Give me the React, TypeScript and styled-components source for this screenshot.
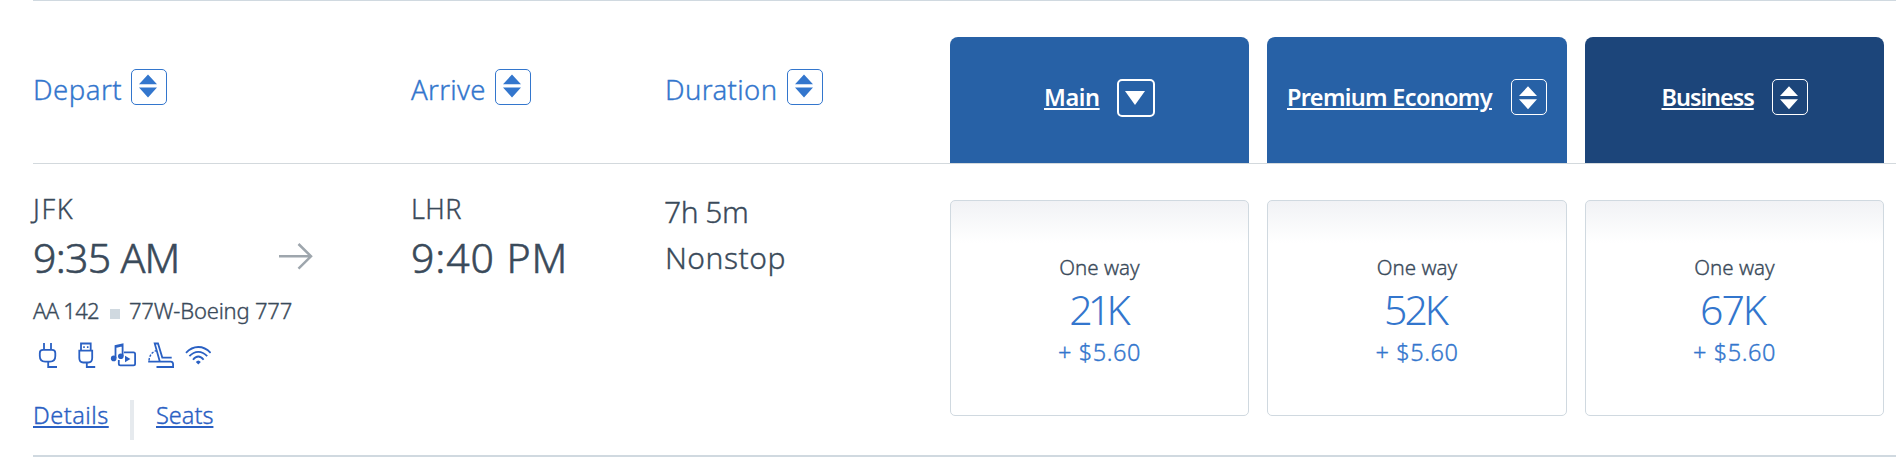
import React from 'react';
import styled, { createGlobalStyle } from 'styled-components';

const GlobalStyle = createGlobalStyle`
  * {
    box-sizing: border-box;
  }

  body {
    margin: 0;
    background: #fff;
    font-family: 'Noto Sans', 'Open Sans', sans-serif;
    color: #3a4a5a;
    overflow: hidden;
  }
`;

const Results = styled.main`
  width: 1896px;
  height: 470px;
  overflow: hidden;
  -webkit-text-stroke: 0.35px currentColor; /* a little more body than the light weight */
`;

// Shared column template so the header lines up with the flight row
const Columns = styled.div`
  display: grid;
  grid-template-columns: 378px 253px 286px 935px;
`;

const Header = styled.header`
  height: 164px;
  margin-left: 33px;
  border-top: 1px solid #d0d9e0;
  border-bottom: 1px solid #d3d9dd;
`;

const FlightRow = styled.section`
  height: 293px;
  margin-left: 33px;
  border-bottom: 2px solid #d0d9e0;
`;

const SortHeading = styled.div`
  display: flex;
  align-items: flex-start;
  padding-top: 68px;
  color: #3376cd;
`;

const SortLabel = styled.span<{ $width: number; $spacing: number; $indent?: number }>`
  width: ${({ $width }) => $width}px;
  padding-left: ${({ $indent = 0 }) => $indent}px;
  font-size: 27.5px;
  font-weight: 300;
  line-height: 42px;
  white-space: nowrap;
  letter-spacing: ${({ $spacing }) => $spacing}px;
`;

const SortButton = styled.button<{ $active?: boolean }>`
  display: flex;
  justify-content: center;
  flex: none;
  width: ${({ $active }) => ($active ? 38 : 36)}px;
  height: ${({ $active }) => ($active ? 38 : 36)}px;
  padding: 0;
  border: ${({ $active }) => ($active ? 2 : 1)}px solid currentColor;
  border-radius: 5px;
  background: transparent;
  color: inherit;
`;

const CabinGroup = styled.div`
  display: grid;
  grid-template-columns: 299px 300px 299px;
  column-gap: 18px;
`;

const CabinTab = styled.div<{ $background: string }>`
  display: flex;
  justify-content: center;
  align-items: flex-start;
  height: 126px;
  margin-top: 36px;
  padding-top: 42px;
  border-radius: 8px 8px 0 0;
  background: ${({ $background }) => $background};
  color: #fff;
`;

const CabinName = styled.a<{ $width: number; $spacing: number }>`
  width: ${({ $width }) => $width}px;
  margin-right: 18px;
  font-size: 23.5px;
  font-weight: 600;
  line-height: 36px;
  white-space: nowrap;
  letter-spacing: ${({ $spacing }) => $spacing}px;
  text-decoration: underline;
  text-decoration-thickness: 2px;
  text-underline-offset: 2px;
  -webkit-text-stroke: 0;
`;

const Stop = styled.div`
  padding-top: 27px;
`;

const Airport = styled.div<{ $spacing: number }>`
  height: 36px;
  font-size: 27px;
  font-weight: 300;
  line-height: 36px;
  letter-spacing: ${({ $spacing }) => $spacing}px;
`;

const TimeLine = styled.div`
  display: flex;
  align-items: center;
  height: 50px;
  margin-top: 5px;
`;

const Time = styled.span<{ $width?: number; $spacing: number }>`
  width: ${({ $width }) => ($width ? `${$width}px` : 'auto')};
  font-size: 41px;
  font-weight: 300;
  line-height: 50px;
  white-space: nowrap;
  letter-spacing: ${({ $spacing }) => $spacing}px;
  -webkit-text-stroke: 0.6px currentColor;
`;

const Aircraft = styled.div`
  display: flex;
  height: 30px;
  margin-top: 14px;
  font-size: 22px;
  line-height: 29px;
  font-weight: 300;
  white-space: nowrap;
  letter-spacing: -0.2px;
`;

const FlightNumber = styled.span`
  width: 77px;
  letter-spacing: -0.7px;
`;

const Bullet = styled.span`
  width: 10px;
  height: 10px;
  margin: 13px 9px 0 0;
  background: #d0d9e0;
`;

const Amenities = styled.div`
  display: flex;
  gap: 11.5px;
  margin: 16px 0 0 2px;
  height: 26px;
`;

const Icon = styled.svg`
  width: 26px;
  height: 26px;
  fill: none;
  stroke: #2a60c3;
  stroke-width: 1.8;
`;

const RowLinks = styled.div`
  display: flex;
  height: 40px;
  margin-top: 32px;
`;

const RowLink = styled.a<{ $width: number; $spacing: number }>`
  width: ${({ $width }) => $width}px;
  font-size: 23.5px;
  font-weight: 300;
  line-height: 30px;
  letter-spacing: ${({ $spacing }) => $spacing}px;
  color: #2a60c3;
  white-space: nowrap;
  text-decoration: underline;
  text-decoration-thickness: 2px;
  text-underline-offset: 2px;
`;

const Divider = styled.span`
  width: 4px;
  height: 40px;
  margin: 0 22px 0 21px;
  background: #e6eaee;
`;

const Duration = styled.div`
  padding-top: 25px;
  font-size: 30px;
  font-weight: 300;
  line-height: 46px;
  white-space: nowrap;
`;

const DurationText = styled.div<{ $spacing: number; $indent?: number }>`
  padding-left: ${({ $indent = 0 }) => $indent}px;
  letter-spacing: ${({ $spacing }) => $spacing}px;
`;

const Fare = styled.button`
  display: flex;
  flex-direction: column;
  align-items: center;
  height: 216px;
  margin-top: 36px;
  padding: 52px 0 0;
  border: 1px solid #d0d9e0;
  border-radius: 5px;
  background: linear-gradient(#f1f2f5, #fff 42px);
  font-family: inherit;
  font-weight: 300;
  color: #3376cd;
`;

const TripType = styled.span`
  font-size: 20.5px;
  line-height: 29px;
  color: #3a4a5a;
`;

const Miles = styled.span<{ $spacing: number }>`
  margin-right: 4px;
  font-size: 41px;
  line-height: 54px;
  letter-spacing: ${({ $spacing }) => $spacing}px;
  -webkit-text-stroke: 0;
`;

const Taxes = styled.span`
  font-size: 23.5px;
  line-height: 32px;
  letter-spacing: 0.6px;
`;

const SortArrows = ({ offset }: { offset: number }) => (
  <svg width="20" height="34" viewBox="0 0 20 34" fill="currentColor">
    <path d={`M9 ${offset}L18 ${offset + 9.7}H0zM0 ${offset + 13}H18L9 ${offset + 22.9}z`} />
  </svg>
);

const DownArrow = () => (
  <svg width="22" height="34" viewBox="0 0 22 34" fill="currentColor">
    <path d="M0 10H20L10 24z" />
  </svg>
);

const ArrowRight = () => (
  <svg width="34" height="28" viewBox="0 0 34 28" fill="none" stroke="#9ea6ad" strokeWidth="2.5">
    <path d="M0 13.3H32M19.5 1L32 13.3L19.5 25.7" />
  </svg>
);

const PowerIcon = () => (
  <Icon viewBox="0 0 26 26">
    <path d="M9 1V7M16 1V7M8 7.8H17Q20.3 7.8 20.3 11V14Q20.3 19.6 15 19.6H10.2Q4.8 19.6 4.8 14V11Q4.8 7.8 8 7.8zM13.2 19.6V25H22" />
  </Icon>
);

const UsbIcon = () => (
  <Icon viewBox="0 0 26 26">
    <path d="M8 8.5V1.5H17.7V8.5M6.3 8.7H19.2V16Q19.2 20.5 15.3 20.5H10.2Q6.3 20.5 6.3 16zM13.8 20.5V25H22.2" />
    <path d="M10.2 5.2H11.8M13.9 5.2H15.5" />
  </Icon>
);

const EntertainmentIcon = () => (
  <Icon viewBox="0 0 26 26">
    <path d="M5.5 16V4L12.6 2.3V14M5.5 5L12.6 3.3M14 10.4H23.5Q25.1 10.4 25.1 12V21.8Q25.1 23.4 23.5 23.4H10.4Q8.8 23.4 8.8 21.8V18" />
    <path d="M15 13.8V20.3L20.4 17z" fill="#2a60c3" stroke="none" />
    <circle cx="3.7" cy="16.4" r="2.8" fill="#2a60c3" stroke="none" />
    <circle cx="10.8" cy="14.2" r="2.8" fill="#2a60c3" stroke="none" />
  </Icon>
);

const SeatIcon = () => (
  <Icon viewBox="0 0 26 26">
    <path d="M11.8 19.5L6.7 1.5H10L14.3 15.6H23.7M0.2 19.7H22.8Q24.8 19.7 25.1 22V25H8.5" />
    <path d="M1 18.6Q1.7 11 8 8.7" strokeWidth="1.4" strokeDasharray="2.4 1.4" />
  </Icon>
);

const WifiIcon = () => (
  <Icon viewBox="0 0 26 26">
    <path d="M1 10.8Q6.4 5 13.3 5T25.6 10.8M4.4 14.2Q8.4 9.8 13.3 9.8T22.2 14.2M8 17.7Q10.4 14.5 13.3 14.5T18.6 17.7" />
    <path d="M13.3 22.6L10.8 20Q13.3 16.8 15.8 20z" fill="#2a60c3" stroke="none" />
  </Icon>
);

const cabins = [
  { name: 'Main', width: 55, spacing: -0.4, color: '#2761a6', miles: '21K', milesSpacing: -4.8, active: true },
  { name: 'Premium Economy', width: 206, spacing: -0.68, color: '#2761a6', miles: '52K', milesSpacing: -3, active: false },
  { name: 'Business', width: 92, spacing: -1.05, color: '#1c457a', miles: '67K', milesSpacing: -2, active: false },
];

const App: React.FC = () => {
  return (
    <Results>
      <GlobalStyle />
      <Header>
        <Columns>
          <SortHeading>
            <SortLabel $width={98} $spacing={0.5}>Depart</SortLabel>
            <SortButton><SortArrows offset={4.5} /></SortButton>
          </SortHeading>
          <SortHeading>
            <SortLabel $width={84} $spacing={0.3}>Arrive</SortLabel>
            <SortButton><SortArrows offset={4.5} /></SortButton>
          </SortHeading>
          <SortHeading>
            <SortLabel $width={123} $spacing={0.4} $indent={1}>Duration</SortLabel>
            <SortButton><SortArrows offset={4.5} /></SortButton>
          </SortHeading>
          <CabinGroup>
            {cabins.map((cabin) => (
              <CabinTab key={cabin.name} $background={cabin.color}>
                <CabinName $width={cabin.width} $spacing={cabin.spacing}>{cabin.name}</CabinName>
                <SortButton $active={cabin.active}>
                  {cabin.active ? <DownArrow /> : <SortArrows offset={6.3} />}
                </SortButton>
              </CabinTab>
            ))}
          </CabinGroup>
        </Columns>
      </Header>

      <FlightRow>
        <Columns>
          <Stop>
            <Airport $spacing={1.6}>JFK</Airport>
            <TimeLine>
              <Time $width={246} $spacing={-0.7}>9:35 AM</Time>
              <ArrowRight />
            </TimeLine>
            <Aircraft>
              <FlightNumber>AA 142</FlightNumber>
              <Bullet />
              <span>77W-Boeing 777</span>
            </Aircraft>
            <Amenities>
              <PowerIcon />
              <UsbIcon />
              <EntertainmentIcon />
              <SeatIcon />
              <WifiIcon />
            </Amenities>
            <RowLinks>
              <RowLink $width={76} $spacing={0.5}>Details</RowLink>
              <Divider />
              <RowLink $width={58} $spacing={0}>Seats</RowLink>
            </RowLinks>
          </Stop>
          <Stop>
            <Airport $spacing={0.4}>LHR</Airport>
            <TimeLine>
              <Time $spacing={0.9}>9:40 PM</Time>
            </TimeLine>
          </Stop>
          <Duration>
            <DurationText $spacing={-0.5}>7h 5m</DurationText>
            <DurationText $spacing={0.5} $indent={1}>Nonstop</DurationText>
          </Duration>
          <CabinGroup>
            {cabins.map((cabin) => (
              <Fare key={cabin.name}>
                <TripType>One way</TripType>
                <Miles $spacing={cabin.milesSpacing}>{cabin.miles}</Miles>
                <Taxes>+ $5.60</Taxes>
              </Fare>
            ))}
          </CabinGroup>
        </Columns>
      </FlightRow>
    </Results>
  );
};

export default App;
